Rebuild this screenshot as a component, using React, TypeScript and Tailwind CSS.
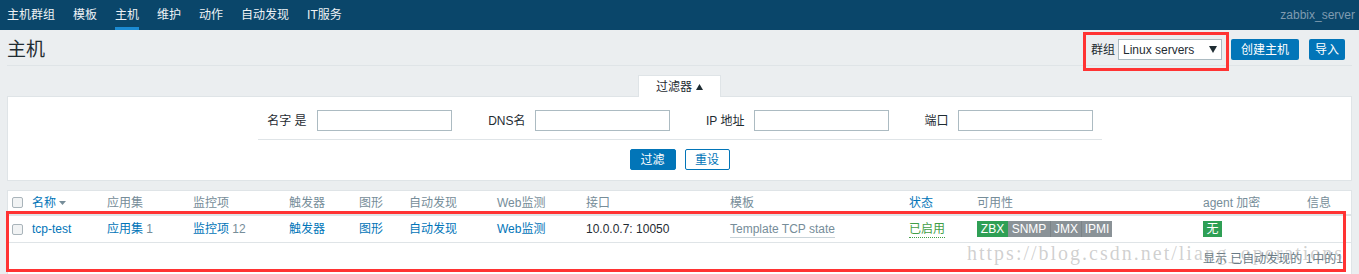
import React from "react";

function Checkbox() {
  return <span className="block w-[11px] h-[11px] rounded-[2px] border border-[#a9b4ba] bg-[#f1f3f4]" />;
}

function Badge({ children, green, w }: { children: React.ReactNode; green?: boolean; w: string }) {
  return (
    <span
      className={
        (green ? "bg-[#2f9f55] " : "bg-[#8a9297] ") +
        w +
        " h-[16px] leading-[16px] text-white text-[12px] text-center inline-block"
      }
    >
      {children}
    </span>
  );
}

export default function App() {
  const navItems = ["主机群组", "模板", "主机", "维护", "动作", "自动发现", "IT服务"];
  const headers: { t: string; blue?: boolean; arrow?: boolean }[] = [
    { t: "" },
    { t: "名称", blue: true, arrow: true },
    { t: "应用集" },
    { t: "监控项" },
    { t: "触发器" },
    { t: "图形" },
    { t: "自动发现" },
    { t: "Web监测" },
    { t: "接口" },
    { t: "模板" },
    { t: "状态", blue: true },
    { t: "可用性" },
    { t: "agent 加密" },
    { t: "信息" },
  ];
  const grid =
    "grid grid-cols-[24px_75px_86px_96px_70px_50px_88px_89px_144px_179px_68px_226px_104px_46px]";

  return (
    <div className="relative w-[1359px] h-[274px] overflow-hidden bg-[#ebeef0] text-[12px] text-[#1f2c33] font-['Liberation_Sans','Noto_Sans_CJK_SC',sans-serif]">
      {/* top sub navigation */}
      <div className="h-[30px] bg-[#0a466a] flex items-stretch justify-between pl-[7px] pr-[4px]">
        <div className="flex gap-[18px]">
          {navItems.map((t) => (
            <span
              key={t}
              className={
                "flex items-center pt-[3px] border-b-[3px] text-[12px] text-[#eef2f5] " +
                (t === "主机" ? "border-[#1b8bd3]" : "border-transparent")
              }
            >
              {t}
            </span>
          ))}
        </div>
        <span className="flex items-center text-[12px] text-[#7f9bb0]">zabbix_server</span>
      </div>

      {/* page header */}
      <div className="mx-[7px] h-[36px] pt-[4px] border-b border-[#dfe4e7] flex items-center justify-between">
        <h1 className="text-[19px] leading-[22px] text-[#1f2c33]">主机</h1>
        <div className="flex items-center mr-[7px]">
          <span className="mr-[3px]">群组</span>
          <div className="w-[104px] h-[21px] bg-white border border-[#acbbc2] flex items-center justify-between pl-[4px] pr-[4px]">
            <span>Linux servers</span>
            <svg width="8" height="7" viewBox="0 0 8 7">
              <path d="M0 0 H8 L4 7 Z" fill="#1f2c33" />
            </svg>
          </div>
          <button className="ml-[9px] w-[68px] h-[21px] bg-[#0275b8] text-white rounded-[2px] text-[12px]">创建主机</button>
          <button className="ml-[10px] w-[36px] h-[21px] bg-[#0275b8] text-white rounded-[2px] text-[12px]">导入</button>
        </div>
      </div>

      {/* filter tab */}
      <div className="mt-[9px] flex justify-center mx-[7px]">
        <div className="relative z-10 -mb-px w-[83px] h-[22px] bg-white border-t border-x border-[#dfe4e7] flex items-center justify-center gap-[4px]">
          <span>过滤器</span>
          <svg width="7" height="6" viewBox="0 0 7 6">
            <path d="M0 6 H7 L3.5 0 Z" fill="#1f2c33" />
          </svg>
        </div>
      </div>

      {/* filter panel */}
      <div className="mx-[7px] border border-[#dfe4e7] bg-white pt-[13px] pb-[10px]">
        <div className="w-[844px] mx-auto">
          <div className="flex h-[21px] items-center">
            <span className="w-[59px] text-right pr-[10px]">名字 是</span>
            <span className="w-[135px] h-[21px] border border-[#acbbc2] bg-white" />
            <span className="w-[83px] text-right pr-[9px]">DNS名</span>
            <span className="w-[135px] h-[21px] border border-[#acbbc2] bg-white" />
            <span className="w-[84px] text-right pr-[9px]">IP 地址</span>
            <span className="w-[135px] h-[21px] border border-[#acbbc2] bg-white" />
            <span className="w-[69px] text-right pr-[9px]">端口</span>
            <span className="w-[135px] h-[21px] border border-[#acbbc2] bg-white" />
          </div>
          <div className="mt-[8px] border-t border-[#dfe4e7]" />
          <div className="mt-[9px] flex justify-center gap-[9px]">
            <button className="w-[46px] h-[21px] bg-[#0275b8] border border-[#0275b8] text-white rounded-[2px] text-[12px]">过滤</button>
            <button className="w-[45px] h-[21px] bg-white border border-[#0275b8] text-[#0275b8] rounded-[2px] text-[12px]">重设</button>
          </div>
        </div>
      </div>

      {/* table panel */}
      <div className="mt-[9px] mx-[7px] border border-[#dfe4e7] bg-white">
        <div className={grid + " h-[25px] items-center border-b-2 border-[#dfe4e7]"}>
          {headers.map((h, i) =>
            i === 0 ? (
              <span key={i} className="pl-[4px]">
                <Checkbox />
              </span>
            ) : (
              <span key={i} className={"flex items-center " + (h.blue ? "text-[#0275b8]" : "text-[#768d99]")}>
                {h.t}
                {h.arrow && (
                  <svg className="ml-[3px]" width="7" height="4" viewBox="0 0 7 4">
                    <path d="M0 0 H7 L3.5 4 Z" fill="#768d99" />
                  </svg>
                )}
              </span>
            )
          )}
        </div>
        <div className={grid + " h-[27px] items-center border-b border-[#dfe4e7]"}>
          <span className="pl-[4px]">
            <Checkbox />
          </span>
          <span className="text-[#0275b8]">tcp-test</span>
          <span>
            <span className="text-[#0275b8]">应用集</span>
            <span className="text-[#768d99]"> 1</span>
          </span>
          <span>
            <span className="text-[#0275b8]">监控项</span>
            <span className="text-[#768d99]"> 12</span>
          </span>
          <span className="text-[#0275b8]">触发器</span>
          <span className="text-[#0275b8]">图形</span>
          <span className="text-[#0275b8]">自动发现</span>
          <span className="text-[#0275b8]">Web监测</span>
          <span>10.0.0.7: 10050</span>
          <span>
            <span className="text-[#768d99] border-b border-[#c9d3d8] pb-[1px]">Template TCP state</span>
          </span>
          <span>
            <span className="text-[#429e47] border-b border-dotted border-[#429e47] pb-[1px]">已启用</span>
          </span>
          <span className="flex">
            <Badge green w="w-[31px]">ZBX</Badge>
            <Badge w="w-[42px]">SNMP</Badge>
            <span className="w-px h-[16px] bg-[#7b8388]" />
            <Badge w="w-[30px]">JMX</Badge>
            <span className="w-px h-[16px] bg-[#7b8388]" />
            <Badge w="w-[30px]">IPMI</Badge>
          </span>
          <span className="flex">
            <Badge green w="w-[19px]">无</Badge>
          </span>
          <span />
        </div>
        <div className="h-[40px] flex justify-end pr-[8px] pt-[7px] text-[#687a85]">
          显示 已自动发现的 1中的1
        </div>
      </div>

      {/* watermark */}
      <div className="absolute left-[967px] top-[241px] text-[20px] leading-[24px] tracking-[2px] text-[rgba(150,150,150,0.45)] font-['Liberation_Serif',serif] whitespace-nowrap pointer-events-none">
        https://blog.csdn.net/liang_operations
      </div>

      {/* red annotation boxes */}
      <div className="absolute left-[1083px] top-[32px] w-[146px] h-[39px] border-[3px] border-[#ff3333] pointer-events-none" />
      <div className="absolute left-[6px] top-[211px] w-[1340px] h-[61px] border-[3px] border-[#ff3333] pointer-events-none" />
    </div>
  );
}
